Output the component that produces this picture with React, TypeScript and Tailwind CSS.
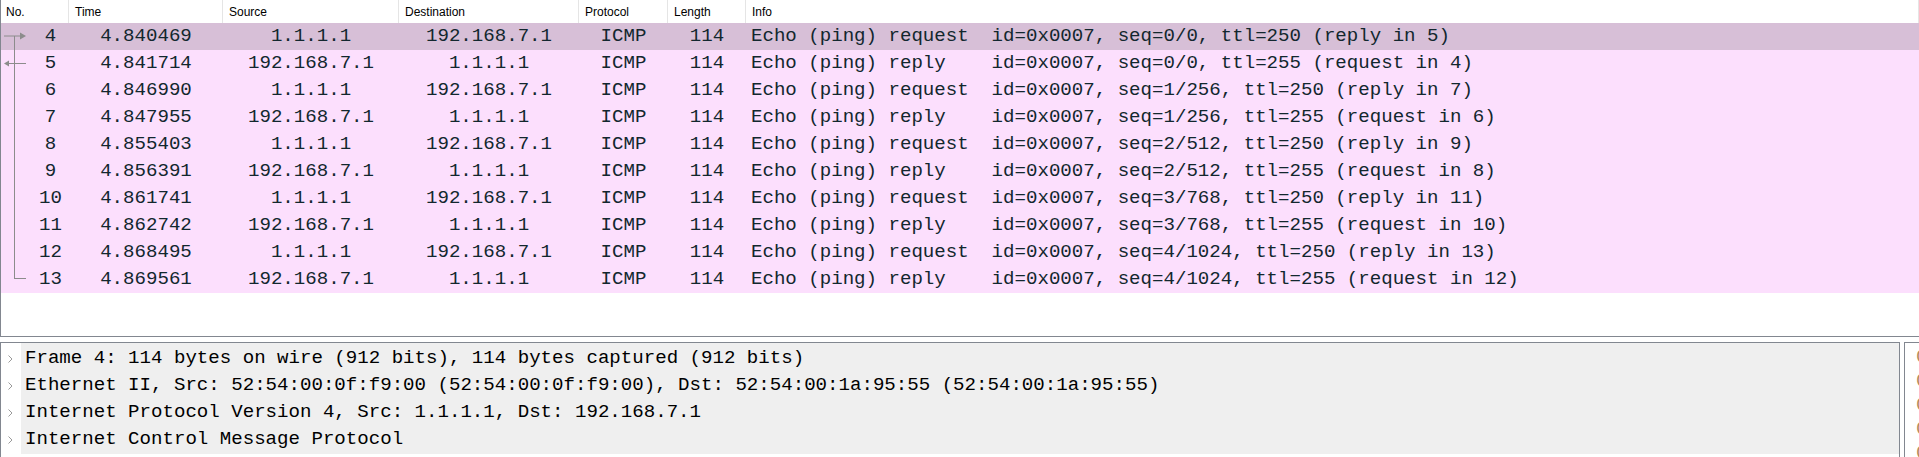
import React from 'react';

type Packet = {
  no: number;
  time: string;
  src: string;
  dst: string;
  info: string;
};

const packets: Packet[] = [
  { no: 4, time: '4.840469', src: '1.1.1.1', dst: '192.168.7.1', info: 'Echo (ping) request  id=0x0007, seq=0/0, ttl=250 (reply in 5)' },
  { no: 5, time: '4.841714', src: '192.168.7.1', dst: '1.1.1.1', info: 'Echo (ping) reply    id=0x0007, seq=0/0, ttl=255 (request in 4)' },
  { no: 6, time: '4.846990', src: '1.1.1.1', dst: '192.168.7.1', info: 'Echo (ping) request  id=0x0007, seq=1/256, ttl=250 (reply in 7)' },
  { no: 7, time: '4.847955', src: '192.168.7.1', dst: '1.1.1.1', info: 'Echo (ping) reply    id=0x0007, seq=1/256, ttl=255 (request in 6)' },
  { no: 8, time: '4.855403', src: '1.1.1.1', dst: '192.168.7.1', info: 'Echo (ping) request  id=0x0007, seq=2/512, ttl=250 (reply in 9)' },
  { no: 9, time: '4.856391', src: '192.168.7.1', dst: '1.1.1.1', info: 'Echo (ping) reply    id=0x0007, seq=2/512, ttl=255 (request in 8)' },
  { no: 10, time: '4.861741', src: '1.1.1.1', dst: '192.168.7.1', info: 'Echo (ping) request  id=0x0007, seq=3/768, ttl=250 (reply in 11)' },
  { no: 11, time: '4.862742', src: '192.168.7.1', dst: '1.1.1.1', info: 'Echo (ping) reply    id=0x0007, seq=3/768, ttl=255 (request in 10)' },
  { no: 12, time: '4.868495', src: '1.1.1.1', dst: '192.168.7.1', info: 'Echo (ping) request  id=0x0007, seq=4/1024, ttl=250 (reply in 13)' },
  { no: 13, time: '4.869561', src: '192.168.7.1', dst: '1.1.1.1', info: 'Echo (ping) reply    id=0x0007, seq=4/1024, ttl=255 (request in 12)' },
];

const details = [
  'Frame 4: 114 bytes on wire (912 bits), 114 bytes captured (912 bits)',
  'Ethernet II, Src: 52:54:00:0f:f9:00 (52:54:00:0f:f9:00), Dst: 52:54:00:1a:95:55 (52:54:00:1a:95:55)',
  'Internet Protocol Version 4, Src: 1.1.1.1, Dst: 192.168.7.1',
  'Internet Control Message Protocol',
];

// related-packet marker drawn in the No. column
function Related({ index, last }: { index: number; last: number }) {
  const c = '#8c8c8c';
  return (
    <svg className="absolute left-0 top-0" width="30" height="27" viewBox="0 0 30 27">
      {index === 0 && (
        <>
          <line x1="3" y1="13" x2="21" y2="13" stroke={c} strokeWidth="1" />
          <polygon points="19,9.5 25,13 19,16.5" fill={c} />
          <line x1="13.5" y1="13" x2="13.5" y2="27" stroke={c} strokeWidth="1" />
        </>
      )}
      {index > 0 && index < last && <line x1="13.5" y1="0" x2="13.5" y2="27" stroke={c} strokeWidth="1" />}
      {index === 1 && (
        <>
          <line x1="7" y1="13.5" x2="25" y2="13.5" stroke={c} strokeWidth="1" />
          <polygon points="3,13.5 8,10.5 8,16.5" fill={c} />
        </>
      )}
      {index === last && (
        <>
          <line x1="13.5" y1="0" x2="13.5" y2="13" stroke={c} strokeWidth="1" />
          <line x1="13" y1="12.5" x2="25" y2="12.5" stroke={c} strokeWidth="1" />
        </>
      )}
    </svg>
  );
}

const mono = "font-['Liberation_Mono','DejaVu_Sans_Mono',monospace] text-[19.1px]";

export default function App() {
  return (
    <div className="w-full h-[457px] overflow-hidden bg-white flex flex-col">
      {/* packet list */}
      <div className="h-[337px] shrink-0 border-l border-b border-[#828790] flex flex-col">
        <div className="h-[23px] flex font-['Liberation_Sans',Arial,sans-serif] text-[12px] text-black">
          <div className="w-[68px] shrink-0 border-r border-[#e5e5e5] pl-[5px] flex items-center">No.</div>
          <div className="w-[154px] shrink-0 border-r border-[#e5e5e5] pl-[6px] flex items-center">Time</div>
          <div className="w-[176px] shrink-0 border-r border-[#e5e5e5] pl-[6px] flex items-center">Source</div>
          <div className="w-[180px] shrink-0 border-r border-[#e5e5e5] pl-[6px] flex items-center">Destination</div>
          <div className="w-[89px] shrink-0 border-r border-[#e5e5e5] pl-[6px] flex items-center">Protocol</div>
          <div className="w-[78px] shrink-0 border-r border-[#e5e5e5] pl-[6px] flex items-center">Length</div>
          <div className="flex-1 pl-[6px] flex items-center border-r border-[#e5e5e5]">Info</div>
        </div>
        <div className={`${mono} text-[#12272e] leading-[27px]`}>
          {packets.map((p, i) => (
            <div key={p.no} className={`h-[27px] flex ${i === 0 ? 'bg-[#d7bfd7]' : 'bg-[#fcdffd]'}`}>
              <div className="relative w-[68px] shrink-0 pl-[31px] text-center">
                <Related index={i} last={packets.length - 1} />
                {p.no}
              </div>
              <div className="w-[154px] shrink-0 text-center">{p.time}</div>
              <div className="w-[176px] shrink-0 text-center">{p.src}</div>
              <div className="w-[180px] shrink-0 text-center">{p.dst}</div>
              <div className="w-[89px] shrink-0 text-center">ICMP</div>
              <div className="w-[78px] shrink-0 text-center">114</div>
              <div className="flex-1 pl-[5px] whitespace-pre">{p.info}</div>
            </div>
          ))}
        </div>
      </div>

      {/* lower panes */}
      <div className="flex-1 flex pt-[5px]">
        <div className="w-[1900px] shrink-0 border-t border-l border-r border-[#828790] flex">
          <div className="w-[20px] shrink-0 flex flex-col pt-[2px]">
            {details.map((d) => (
              <div key={d} className="h-[27px] flex items-center pl-[7px]">
                <svg width="5" height="8" viewBox="0 0 5 8">
                  <path d="M0.5 0.5 L4 4 L0.5 7.5" fill="none" stroke="#9a9a9a" strokeWidth="1" />
                </svg>
              </div>
            ))}
          </div>
          <div className="flex-1 self-start bg-[#efefef] pt-[2px] pb-[1px]">
            {details.map((d) => (
              <div key={d} className={`${mono} h-[27px] leading-[27px] pl-[4px] text-black whitespace-pre`}>
                {d}
              </div>
            ))}
          </div>
        </div>
        <div className="ml-[4px] flex-1 border-t border-l border-[#828790] pt-[2px] overflow-hidden">
          {['0000', '0010', '0020', '0030', '0040'].map((o) => (
            <div key={o} className={`${mono} h-[24px] leading-[24px] pl-[11px] text-[#b48a5e] whitespace-pre`}>
              {o}
            </div>
          ))}
        </div>
      </div>
    </div>
  );
}
